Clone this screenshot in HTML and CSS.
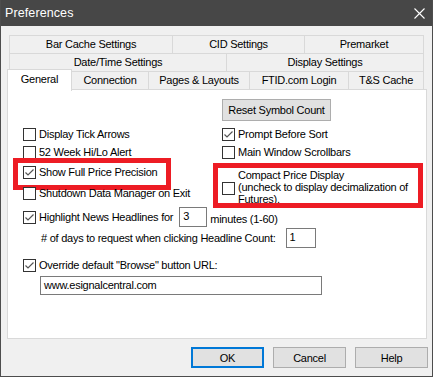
FILE: index.html
```html
<!DOCTYPE html>
<html lang="en">
<head>
<meta charset="utf-8" />
<title>Preferences</title>
<link rel="stylesheet" href="styles.css">
</head>
<body>
  <div class="window" role="dialog" aria-label="Preferences">
    <div class="titlebar">
      <span class="title">Preferences</span>
      <svg class="close" width="11" height="11" viewBox="0 0 11 11">
        <path d="M0.5 0.5 L10.5 10.5 M10.5 0.5 L0.5 10.5" stroke="#fff" stroke-width="1.1" fill="none" />
      </svg>
    </div>

    <div class="tabs">
      <div class="tab-row">
        <div class="tab" style="width:164px">Bar Cache Settings</div>
        <div class="tab" style="width:133px">CID Settings</div>
        <div class="tab" style="width:120px">Premarket</div>
      </div>
      <div class="tab-row">
        <div class="tab" style="width:218px">Date/Time Settings</div>
        <div class="tab" style="width:198px">Display Settings</div>
      </div>
      <div class="tab-row front">
        <div class="tab active" style="width:65px">General</div>
        <div class="tab" style="width:78px">Connection</div>
        <div class="tab" style="width:102px">Pages &amp; Layouts</div>
        <div class="tab" style="width:100px">FTID.com Login</div>
        <div class="tab" style="width:76px">T&amp;S Cache</div>
      </div>
    </div>

    <div class="panel">
      <div class="columns">
        <div class="col left">
          <div class="check"><span class="box"></span>Display Tick Arrows</div>
          <div class="check gap-a"><span class="box"></span>52 Week Hi/Lo Alert</div>
          <div class="check gap-b">
            <span class="box on"><svg viewBox="0 0 11 11" width="11" height="11"><polyline points="1.5,5.5 4,8 9.5,2.5" /></svg></span>Show Full Price Precision
            <span class="mark mark-one"></span>
          </div>
          <div class="check gap-c"><span class="box"></span>Shutdown Data Manager on Exit</div>
        </div>
        <div class="col right">
          <button class="btn reset" type="button">Reset Symbol Count</button>
          <div class="check gap-r"><span class="box on"><svg viewBox="0 0 11 11" width="11" height="11"><polyline points="1.5,5.5 4,8 9.5,2.5" /></svg></span>Prompt Before Sort</div>
          <div class="check gap-a"><span class="box"></span>Main Window Scrollbars</div>
          <div class="check multi">
            <span class="box"></span>
            <span class="lines">Compact Price Display<br>(uncheck to display decimalization of<br>Futures).</span>
            <span class="mark mark-two"></span>
          </div>
        </div>
      </div>

      <div class="line highlight">
        <span class="box on"><svg viewBox="0 0 11 11" width="11" height="11"><polyline points="1.5,5.5 4,8 9.5,2.5" /></svg></span>
        <span>Highlight News Headlines for</span>
        <span class="field small">3</span>
        <span class="after">minutes (1-60)</span>
      </div>

      <div class="line days">
        <span># of days to request when clicking Headline Count:</span>
        <span class="field days-field">1</span>
      </div>

      <div class="check override"><span class="box on"><svg viewBox="0 0 11 11" width="11" height="11"><polyline points="1.5,5.5 4,8 9.5,2.5" /></svg></span>Override default "Browse" button URL:</div>
      <div class="field url">www.esignalcentral.com</div>
    </div>

    <div class="actions">
      <button class="btn default" type="button">OK</button>
      <button class="btn" type="button">Cancel</button>
      <button class="btn" type="button">Help</button>
    </div>
  </div>
</body>
</html>
```

FILE: styles.css
```css
body {
  margin: 0;
  background: #f0f0f0;
  font-family: "Liberation Sans", Arial, sans-serif;
  font-size: 11px;
  letter-spacing: -0.25px;
  color: #000;
}
.window {
  width: 433px;
  height: 377px;
  box-sizing: border-box;
  border: 1px solid #4d4d4d;
  border-top: 0;
  background: #f0f0f0;
}
.titlebar {
  height: 26px;
  background: #474747;
  display: flex;
  align-items: center;
  justify-content: space-between;
  padding-left: 4px;
}
.title {
  color: #fff;
  font-size: 12.5px;
  letter-spacing: 0.1px;
  padding-bottom: 1px;
}
.close {
  margin-right: 7px;
}
.tabs {
  margin-top: 9px;
  margin-left: 8px;
}
.tab-row {
  display: flex;
  height: 19px;
}
.tab-row + .tab-row {
  margin-top: -1px;
}
.tab-row.front {
  margin-left: -2px;
}
.tab {
  box-sizing: border-box;
  height: 19px;
  border: 1px solid #d9d9d9;
  background: #f0f0f0;
  text-align: center;
  line-height: 16px;
  white-space: nowrap;
}
.tab + .tab {
  margin-left: -1px;
}
.tab.active {
  position: relative;
  z-index: 1;
  margin-top: -2px;
  height: 22px;
  border-bottom: 0;
  background: #fff;
  line-height: 19px;
}
.panel {
  width: 420px;
  height: 250px;
  box-sizing: border-box;
  margin-left: 6px;
  margin-top: -1px;
  border: 1px solid #d9d9d9;
  background: #fff;
  padding-left: 15px;
}
.columns {
  display: grid;
  grid-template-columns: 199px 1fr;
}
.col {
  display: flex;
  flex-direction: column;
  align-items: flex-start;
}
.col.left {
  padding-top: 38px;
}
.col.right {
  padding-top: 9px;
}
.check {
  position: relative;
  display: flex;
  align-items: center;
  height: 13px;
  line-height: 13px;
  white-space: nowrap;
}
.box {
  width: 13px;
  height: 13px;
  box-sizing: border-box;
  border: 1px solid #333;
  background: #fff;
  margin-right: 3px;
  flex: none;
}
.box svg {
  display: block;
}
.box polyline {
  fill: none;
  stroke: #555;
  stroke-width: 1.2;
}
.gap-a { margin-top: 5px; }
.gap-b { margin-top: 7px; }
.gap-c { margin-top: 8px; }
.gap-r { margin-top: 7px; }
.check.multi {
  height: auto;
  margin-top: 10px;
  line-height: 12px;
}
.check.multi .box {
  margin-top: 3px;
}
.mark {
  position: absolute;
  border: 5px solid #ed1c24;
  box-sizing: border-box;
}
.mark-one {
  left: -10px;
  top: -8px;
  width: 158px;
  height: 32px;
}
.mark-two {
  left: -9px;
  top: -6px;
  width: 210px;
  height: 45px;
}
.btn {
  font-family: inherit;
  font-size: 11px;
  letter-spacing: -0.25px;
  color: #000;
  background: #e1e1e1;
  border: 1px solid #adadad;
  box-sizing: border-box;
  padding: 0;
  margin: 0;
}
.btn.reset {
  width: 109px;
  height: 22px;
}
.line {
  display: flex;
  align-items: center;
  white-space: nowrap;
}
.highlight {
  margin-top: 2px;
  height: 20px;
}
.field {
  box-sizing: border-box;
  border: 1px solid #7a7a7a;
  background: #fff;
  padding-left: 3px;
  line-height: 17px;
}
.field.small {
  width: 28px;
  height: 20px;
  margin-left: 6px;
}
.after {
  margin-left: 3px;
  padding-top: 3px;
}
.days {
  margin-top: 1px;
  margin-left: 18px;
  height: 20px;
}
.field.days-field {
  width: 30px;
  height: 20px;
  margin-left: 10px;
}
.override {
  margin-top: 11px;
}
.field.url {
  width: 282px;
  height: 19px;
  margin-top: 4px;
  margin-left: 17px;
  line-height: 16px;
}
.actions {
  display: flex;
  justify-content: flex-end;
  gap: 9px;
  margin-top: 8px;
  padding-right: 4px;
}
.actions .btn {
  width: 73px;
  height: 21px;
}
.btn.default {
  border: 2px solid #0078d7;
}
```
